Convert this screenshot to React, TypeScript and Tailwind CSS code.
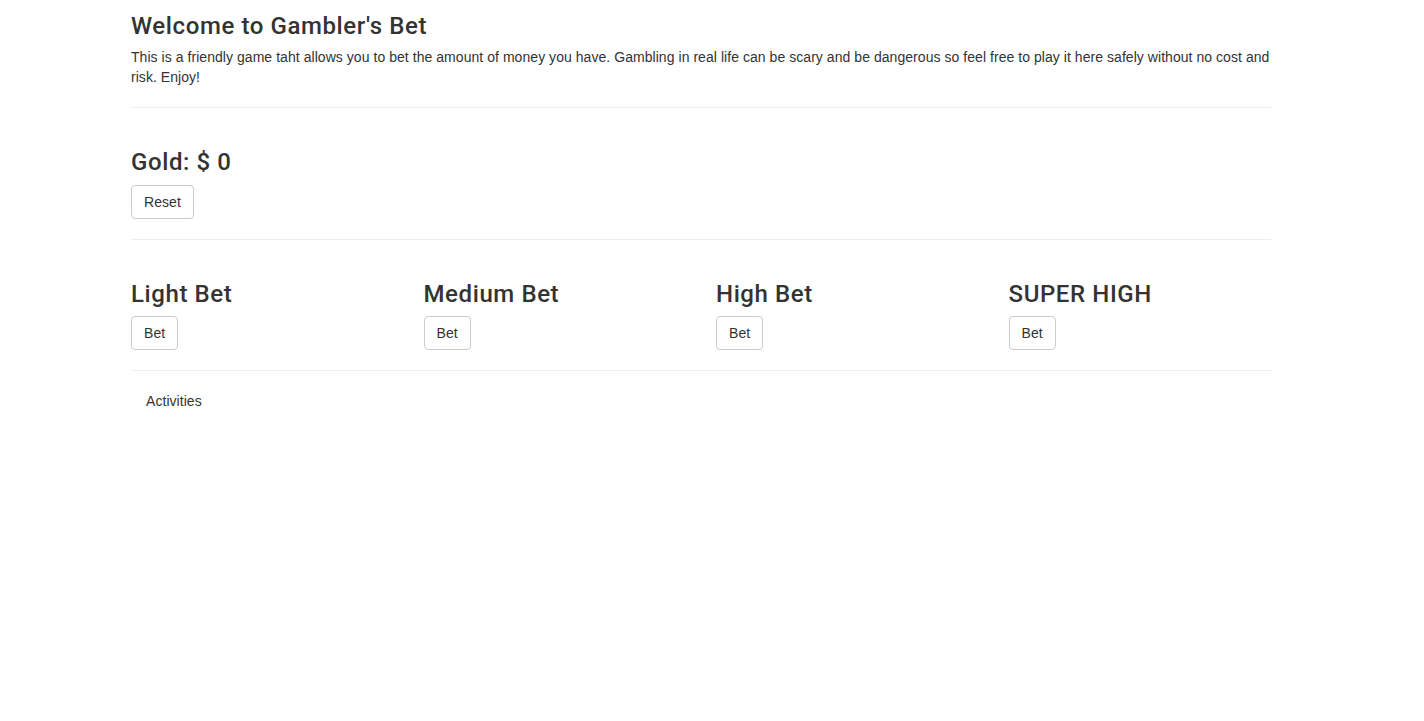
import { useState } from 'react';

const bets = [
  { name: 'Light Bet', amount: 10 },
  { name: 'Medium Bet', amount: 100 },
  { name: 'High Bet', amount: 1000 },
  { name: 'SUPER HIGH', amount: 10000 },
];

const btn =
  'rounded-[4px] border border-[#ccc] bg-white px-3 py-[6px] text-sm leading-5 text-[#333] hover:bg-[#e6e6e6]';

const heading =
  "mb-[9px] pt-px font-['Roboto',Arial,sans-serif] text-2xl leading-[1.1] font-medium tracking-[0.6px]";

export default function App() {
  const [gold, setGold] = useState(0);
  const [log, setLog] = useState<string[]>([]);

  function bet(amount: number) {
    const win = Math.random() < 0.5;
    setGold((g) => (win ? g + amount : g - amount));
    setLog((l) => [`${win ? 'Won' : 'Lost'} $${amount}`, ...l]);
  }

  return (
    <div className="min-h-screen bg-white font-['Liberation_Sans',Arial,sans-serif] text-sm leading-5 tracking-[0.05px] text-[#333]">
      <div className="ml-[131px] w-[1140px] pt-3">
        <h3 className={heading}>Welcome to Gambler's Bet</h3>
        <p className="-mt-px mb-[10px]">
          This is a friendly game taht allows you to bet the amount of money you have. Gambling in real life can be scary
          and be dangerous so feel free to play it here safely without no cost and risk. Enjoy!
        </p>
        <hr className="my-5 border-t border-[#eee]" />

        <div className="pt-5">
          <h3 className={heading}>Gold: $ {gold}</h3>
          <button type="button" className={btn} onClick={() => setGold(0)}>
            Reset
          </button>
        </div>
        <hr className="my-5 border-t border-[#eee]" />

        <div className="-mx-[15px] grid grid-cols-4 pt-5">
          {bets.map((b) => (
            <div key={b.name} className="px-[15px]">
              <h3 className={heading}>{b.name}</h3>
              <button type="button" className={btn} onClick={() => bet(b.amount)}>
                Bet
              </button>
            </div>
          ))}
        </div>
        <hr className="my-5 border-t border-[#eee]" />

        <div className="px-[15px]">
          <p>Activities</p>
          {log.map((entry, i) => (
            <p key={i}>{entry}</p>
          ))}
        </div>
      </div>
    </div>
  );
}
